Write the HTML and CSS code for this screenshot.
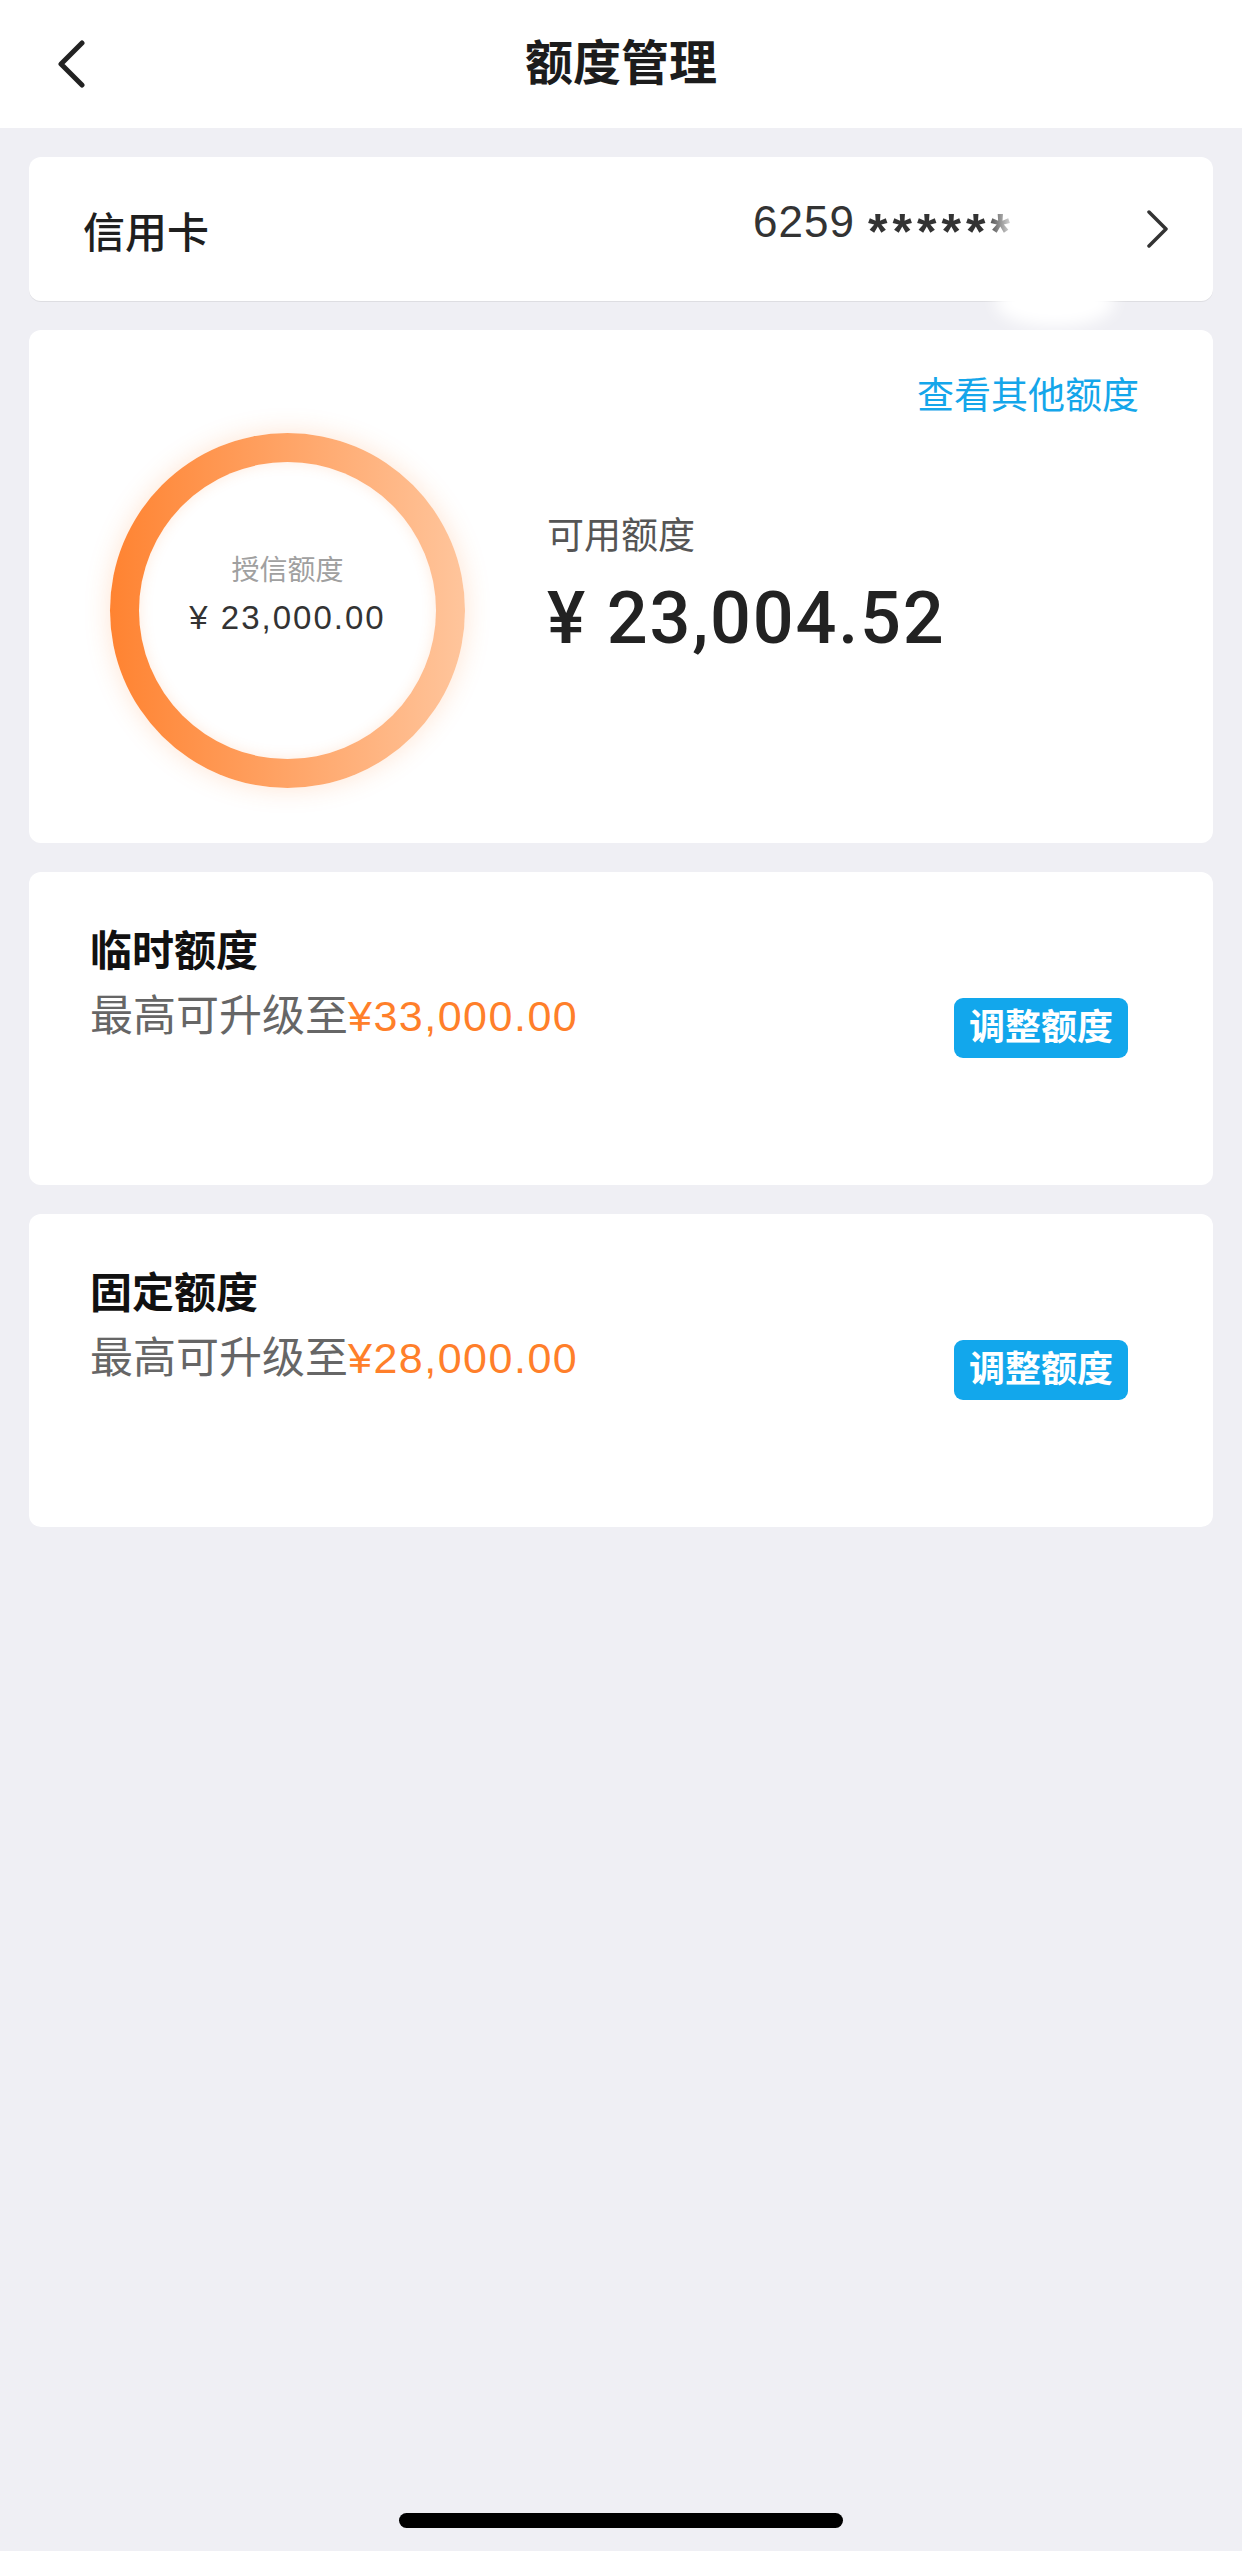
FILE: index.html
```html
<!DOCTYPE html>
<html lang="zh-CN">
<head>
<meta charset="utf-8">
<title>额度管理</title>
<link rel="stylesheet" href="styles.css">
</head>
<body>
<div class="page">
  <header class="nav">
    <div class="nav-back">
      <svg width="30" height="48" viewBox="0 0 30 48"><polyline points="25,3 4,24 25,45" fill="none" stroke="#222" stroke-width="5" stroke-linecap="round" stroke-linejoin="round"/></svg>
    </div>
    <div class="nav-title">额度管理</div>
    <div></div>
  </header>

  <main class="content">
    <section class="card card-account">
      <div class="account-label">信用卡</div>
      <div class="account-no">6259 <span class="stars">******</span></div>
      <svg class="chev" width="22" height="40" viewBox="0 0 22 40"><polyline points="2,3 19,20 2,37" fill="none" stroke="#333" stroke-width="3.5" stroke-linecap="round" stroke-linejoin="round"/></svg>
      <div class="redact-blob"></div>
      <div class="redact"></div>
    </section>

    <section class="card card-quota">
      <div class="quota-link">查看其他额度</div>
      <div class="quota-body">
        <div class="ring">
          <div class="ring-inner">
            <div class="ring-label">授信额度</div>
            <div class="ring-amount">¥ 23,000.00</div>
          </div>
        </div>
        <div class="quota-info">
          <div class="quota-label">可用额度</div>
          <div class="quota-amount">¥ 23,004.52</div>
        </div>
      </div>
    </section>

    <section class="card card-limit">
      <div class="limit-info">
        <div class="limit-title">临时额度</div>
        <div class="limit-desc">最高可升级至<span class="amt">¥33,000.00</span></div>
      </div>
      <div class="btn">调整额度</div>
    </section>

    <section class="card card-limit">
      <div class="limit-info">
        <div class="limit-title">固定额度</div>
        <div class="limit-desc">最高可升级至<span class="amt">¥28,000.00</span></div>
      </div>
      <div class="btn">调整额度</div>
    </section>
  </main>

  <div class="home"></div>
</div>
</body>
</html>
```

FILE: styles.css
```css
* { box-sizing: border-box; }
html, body { margin: 0; padding: 0; }
body {
  background: #efeff4;
  font-family: "Liberation Sans", "Noto Sans CJK SC", sans-serif;
}
.page {
  width: 1242px;
  height: 2551px;
  display: flex;
  flex-direction: column;
  background: #efeff4;
  overflow: hidden;
}
.nav {
  height: 128px;
  flex-shrink: 0;
  background: #fff;
  display: grid;
  grid-template-columns: 1fr auto 1fr;
  align-items: center;
}
.nav-back { padding-left: 57px; display: flex; align-items: center; }
.nav-title {
  font-size: 48px;
  font-weight: 700;
  color: #1c1c1c;
  line-height: 60px;
}
.content {
  padding: 29px 29px 0;
  display: flex;
  flex-direction: column;
  gap: 29px;
}
.card {
  background: #fff;
  border-radius: 12px;
}
.card-account {
  height: 144px;
  display: flex;
  align-items: center;
  padding: 0 44px 0 54px;
  position: relative;
  box-shadow: 0 1px 0 rgba(0,0,0,0.07);
}
.account-label {
  font-size: 42px;
  font-weight: 500;
  color: #1f1f1f;
}
.account-no {
  margin-left: auto;
  width: 394px;
  font-size: 44px;
  color: #333;
  letter-spacing: 1px;
  white-space: nowrap;
}
.stars {
  font-size: 50px;
  font-weight: 700;
  letter-spacing: 5px;
  vertical-align: -12px;
}
.chev { display: block; flex-shrink: 0; }
.redact {
  position: absolute;
  left: 956px;
  top: 15px;
  width: 126px;
  height: 78px;
  background: linear-gradient(90deg, rgba(255,255,255,0), #fff 32px);
}
.redact-blob {
  position: absolute;
  left: 966px;
  top: 120px;
  width: 120px;
  height: 50px;
  border-radius: 50%;
  background: #fff;
  filter: blur(8px);
}
.card-quota {
  padding: 42px 74px 55px 81px;
}
.quota-link {
  text-align: right;
  font-size: 37px;
  line-height: 50px;
  color: #14a6ea;
}
.quota-body {
  display: flex;
  align-items: flex-start;
  gap: 82px;
  margin-top: 11px;
}
.ring {
  width: 355px;
  height: 355px;
  flex-shrink: 0;
  border-radius: 50%;
  padding: 29px;
  background: linear-gradient(90deg, #ff8331, #ffc59c);
  box-shadow: 0 0 26px rgba(255, 130, 50, 0.22);
}
.ring-inner {
  width: 100%;
  height: 100%;
  border-radius: 50%;
  background: #fff;
  box-shadow: inset 0 0 14px rgba(255, 140, 60, 0.18);
  display: flex;
  flex-direction: column;
  align-items: center;
  justify-content: center;
  padding-bottom: 32px;
}
.ring-label {
  font-size: 28px;
  line-height: 40px;
  color: #a0a0a0;
}
.ring-amount {
  font-size: 33px;
  line-height: 42px;
  color: #333;
  letter-spacing: 2px;
  margin-top: 6px;
}
.quota-info { margin-top: 79px; }
.quota-label {
  font-size: 37px;
  line-height: 50px;
  color: #555;
}
.quota-amount {
  margin-top: 16px;
  font-family: Roboto, "Liberation Sans", sans-serif;
  font-size: 72px;
  line-height: 82px;
  font-weight: 500;
  letter-spacing: 1.8px;
  color: #222;
}
.card-limit {
  display: flex;
  align-items: flex-start;
  padding: 52px 85px 127px 61px;
}
.limit-info { flex: 1; }
.limit-title {
  font-size: 42px;
  line-height: 56px;
  font-weight: 700;
  color: #111;
}
.limit-desc {
  margin-top: 8px;
  font-size: 43px;
  line-height: 56px;
  color: #666;
}
.limit-desc .amt { color: #ff7f2a; letter-spacing: 1.5px; }
.btn {
  margin-top: 74px;
  width: 174px;
  height: 60px;
  flex-shrink: 0;
  border-radius: 9px;
  background: #12a7ec;
  color: #fff;
  font-size: 36px;
  font-weight: 700;
  line-height: 60px;
  text-align: center;
}
.home {
  margin: auto auto 23px;
  width: 444px;
  height: 15px;
  border-radius: 8px;
  background: #000;
  flex-shrink: 0;
}
```
